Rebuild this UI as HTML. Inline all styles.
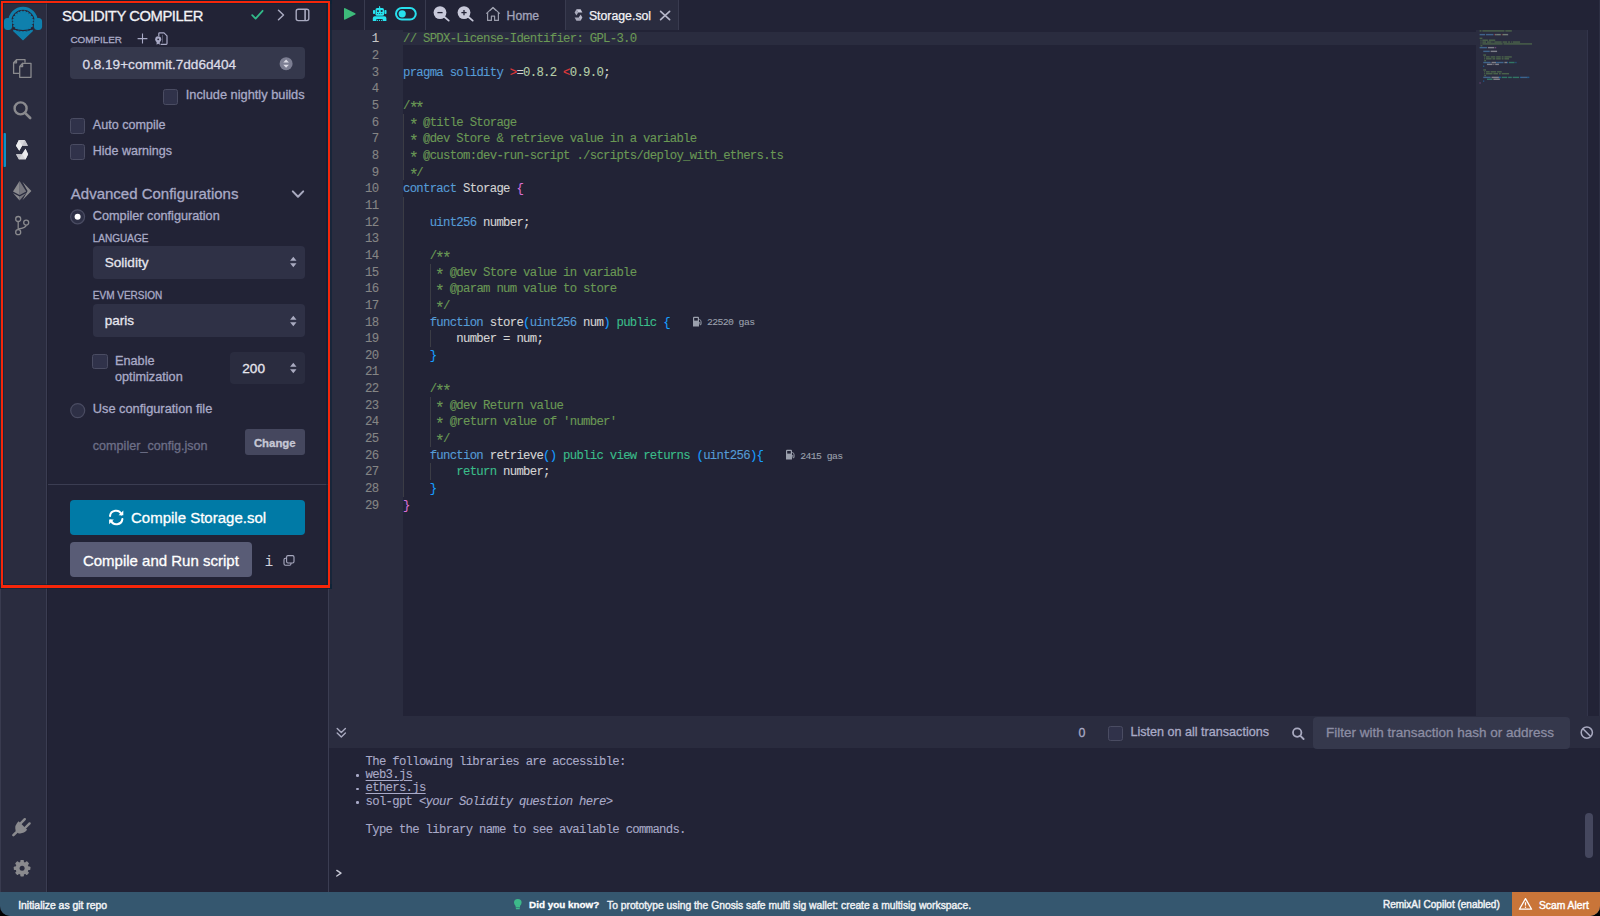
<!DOCTYPE html>
<html><head><meta charset="utf-8">
<style>
*{margin:0;padding:0;box-sizing:border-box}
html,body{width:1600px;height:916px;overflow:hidden;background:#000}
body{position:relative;font-family:"Liberation Sans",sans-serif;color:#a9aac0}
.a{position:absolute}
.t{position:absolute;white-space:nowrap;line-height:1;-webkit-text-stroke:0.3px currentColor}
.mono{-webkit-text-stroke:0.1px currentColor}
.mono{font-family:"Liberation Mono",monospace}
svg{position:absolute;overflow:visible}
.cb{position:absolute;width:15.2px;height:15.5px;background:#30324a;border:1px solid #4a4c62;border-radius:2.5px}
</style></head><body>
<div class="a" style="left:0px;top:0px;width:1600px;height:916px;background:#222336;border-radius:0 0 10px 10px"></div>
<div class="a" style="left:0px;top:0px;width:46px;height:892px;background:#2a2c3f"></div>
<div class="a" style="left:46px;top:0px;width:1px;height:892px;background:#3b3d52"></div>
<div class="a" style="left:328px;top:0px;width:1px;height:892px;background:#3b3d52"></div>
<svg style="left:0;top:0" width="46" height="46" viewBox="0 0 46 46">
<g fill="#0f80ad">
<path d="M8.25 21.45 A14.75 14.75 0 0 1 37.75 21.45 L34.75 21.45 A11.75 11.75 0 0 0 11.25 21.45 Z"/>
<rect x="8.25" y="21" width="3" height="4"/>
<rect x="34.75" y="21" width="3" height="4"/>
<rect x="3.9" y="18.1" width="8.2" height="11.8" rx="3.6"/>
<rect x="33.9" y="18.1" width="8.2" height="11.8" rx="3.6"/>
<path d="M13.4 29.6 Q23 33.6 32.6 29.6 L23 39.4 Z"/>
</g>
<circle cx="23" cy="21.4" r="11.1" fill="#2a1f30"/>
<g fill="#0f80ad">
<circle cx="23" cy="21.4" r="9.3"/>
<circle cx="13.72" cy="19.93" r="1.5"/><circle cx="14.62" cy="17.13" r="1.5"/><circle cx="16.35" cy="14.75" r="1.5"/><circle cx="18.73" cy="13.02" r="1.5"/><circle cx="21.53" cy="12.12" r="1.5"/><circle cx="24.47" cy="12.12" r="1.5"/><circle cx="27.27" cy="13.02" r="1.5"/><circle cx="29.65" cy="14.75" r="1.5"/><circle cx="31.38" cy="17.13" r="1.5"/><circle cx="32.28" cy="19.93" r="1.5"/><circle cx="32.28" cy="22.87" r="1.5"/><circle cx="31.38" cy="25.67" r="1.5"/><circle cx="29.65" cy="28.05" r="1.5"/><circle cx="27.27" cy="29.78" r="1.5"/><circle cx="24.47" cy="30.68" r="1.5"/><circle cx="21.53" cy="30.68" r="1.5"/><circle cx="18.73" cy="29.78" r="1.5"/><circle cx="16.35" cy="28.05" r="1.5"/><circle cx="14.62" cy="25.67" r="1.5"/><circle cx="13.72" cy="22.87" r="1.5"/>
</g>
<path d="M11.6 28.4 Q23 33.4 34.4 28.4 L34.4 36 L11.6 36 Z" fill="#0f80ad" opacity="0"/>
<path d="M12.8 28.6 Q23 32.6 33.2 28.6" fill="none" stroke="#2a1f30" stroke-width="1.1"/>
<path d="M13.4 29.2 Q23 33.2 32.6 29.2 L33 30.4 L23 40 L13 30.4 Z" fill="#0f80ad" transform="translate(0,0.6)"/>
</svg>
<div class="a" style="left:3px;top:133px;width:2.5px;height:33.5px;background:#0f8fc4;border-radius:1px"></div>
<svg style="left:0;top:50" width="46" height="34" viewBox="0 50 46 34">
<g fill="none" stroke="#8a8a8e" stroke-width="1.3" stroke-linejoin="round">
<path d="M16.5 59.6 L25 59.6 L25 62.7 M19.1 73.4 L13.6 73.4 L13.6 62.8 L16.5 59.6 L16.5 62.8 L13.6 62.8"/>
<path d="M22.6 63.3 L31 63.3 L31 77.3 L19.7 77.3 L19.7 66.5 L22.6 63.3 L22.6 66.5 L19.7 66.5"/>
</g></svg>
<svg style="left:0;top:95" width="46" height="30" viewBox="0 95 46 30">
<circle cx="20.6" cy="108.4" r="6" fill="none" stroke="#8a8a8e" stroke-width="2.4"/>
<path d="M25 112.8 L30.2 118" stroke="#8a8a8e" stroke-width="2.6" stroke-linecap="round"/>
</svg>
<svg style="left:0;top:136" width="46" height="28" viewBox="0 136 46 28">
<path d="M18.9 140 L24.8 140 L27.9 145.8 L22.1 145.8 L19.3 150.7 L16 145.8 Z" fill="#d8d8dc"/>
<path d="M18.9 140 L22.1 145.8 L19.3 150.7 L16 145.8 Z" fill="#ececee"/>
<path d="M24.8 140 L27.9 145.8 L22.1 145.8 Z" fill="#c4c4ca"/>
<path d="M25.5 148.8 L28.1 154.2 L25.5 159.4 L19 159.4 L16 154.2 L21.8 154.2 Z" fill="#d8d8dc"/>
<path d="M25.5 148.8 L28.1 154.2 L25.5 159.4 L22.4 154.2 Z" fill="#ececee"/>
<path d="M16 154.2 L21.8 154.2 L19 159.4 Z" fill="#c4c4ca"/>
</svg>
<svg style="left:0;top:178" width="46" height="26" viewBox="0 178 46 26">
<g fill="#8a8a8e">
<path d="M19.6 181 L13 191.4 L19.6 195 Z"/>
<path d="M19.6 181 L26.2 191.4 L19.6 195 Z" opacity="0.8"/>
<path d="M13 192.9 L19.6 200.4 L19.6 196.6 Z"/>
<path d="M26.2 192.9 L19.6 200.4 L19.6 196.6 Z" opacity="0.8"/>
<path d="M22.4 181.8 L31.4 191 L22.4 200.2 L27.6 191 Z"/>
</g></svg>
<svg style="left:0;top:212" width="46" height="28" viewBox="0 212 46 28">
<g fill="none" stroke="#8a8a8e" stroke-width="1.3">
<circle cx="18.2" cy="219" r="2.5"/>
<circle cx="18.2" cy="232.2" r="2.5"/>
<circle cx="26.2" cy="222.6" r="2.5"/>
<path d="M18.2 221.5 L18.2 229.7"/>
<path d="M26.2 225.1 Q26 228 18.2 229"/>
</g></svg>
<svg style="left:0;top:814" width="46" height="26" viewBox="0 814 46 26">
<g fill="#8a8a8e">
<path d="M13.4 835.2 L17.8 830.8" stroke="#8a8a8e" stroke-width="2.6" stroke-linecap="round"/>
<path d="M15.6 830.4 Q14.2 825.2 18.6 821.2 L27.2 829.8 Q23.6 834.2 18.2 833.2 Z"/>
<path d="M20.4 823.6 L24.8 819.2" stroke="#8a8a8e" stroke-width="2.4" stroke-linecap="round"/>
<path d="M25 828 L29.6 823.4" stroke="#8a8a8e" stroke-width="2.4" stroke-linecap="round"/>
</g></svg>
<svg style="left:0;top:856" width="46" height="24" viewBox="0 856 46 24">
<g transform="translate(22.1,868.2)">
<circle r="6.5" fill="#8a8a8e"/>
<g fill="#8a8a8e">
<rect x="-1.8" y="-8.3" width="3.6" height="16.6" rx="0.8"/>
<rect x="-1.8" y="-8.3" width="3.6" height="16.6" rx="0.8" transform="rotate(45)"/>
<rect x="-1.8" y="-8.3" width="3.6" height="16.6" rx="0.8" transform="rotate(90)"/>
<rect x="-1.8" y="-8.3" width="3.6" height="16.6" rx="0.8" transform="rotate(135)"/>
</g>
<circle r="2.5" fill="#2a2c3f"/>
</g></svg>
<div class="t" style="left:62.00px;top:8.67px;font-size:14.8px;color:#f2f2f6;letter-spacing:-0.45px">SOLIDITY COMPILER</div>
<svg style="left:250;top:6" width="20" height="18" viewBox="250 6 20 18">
<path d="M252.2 15.2 L255.6 18.6 L262.6 10.8" fill="none" stroke="#32ba89" stroke-width="1.8" stroke-linecap="round" stroke-linejoin="round"/>
</svg>
<svg style="left:275;top:6" width="12" height="18" viewBox="275 6 12 18">
<path d="M278.5 10.2 L283.5 15 L278.5 19.8" fill="none" stroke="#a9aac0" stroke-width="1.5" stroke-linecap="round" stroke-linejoin="round"/>
</svg>
<svg style="left:292;top:6" width="20" height="18" viewBox="292 6 20 18">
<rect x="296.2" y="9.2" width="12.6" height="11.4" rx="2" fill="none" stroke="#a9aac0" stroke-width="1.4"/>
<rect x="304.3" y="9.2" width="1.6" height="11.4" fill="#a9aac0"/>
</svg>
<div class="t" style="left:70.40px;top:34.52px;font-size:9.9px;color:#a9aac6;">COMPILER</div>
<svg style="left:134;top:30" width="40" height="18" viewBox="134 30 40 18">
<path d="M142.5 33.6 L142.5 43.4 M137.6 38.6 L147.4 38.6" stroke="#a9aac6" stroke-width="1.1"/>
<path d="M158.8 36 L158.8 33.6 Q158.8 32.8 159.6 32.8 L164 32.8 L167 35.8 L167 43.6 Q167 44.4 166.2 44.4 L160.6 44.4" fill="none" stroke="#a9aac6" stroke-width="1.2" stroke-linejoin="round"/>
<path d="M162.6 34.8 L162.6 42.6" stroke="#a9aac6" stroke-width="0.7" opacity="0.6"/>
<path d="M156.6 41 L156.6 44.8 L158.2 43.8 L159.8 44.8 L159.8 41 Z" fill="#a9aac6"/>
<circle cx="158.2" cy="39.3" r="3" fill="#a9aac6"/>
<circle cx="158.2" cy="39.3" r="0.9" fill="#222336"/>
</svg>
<div class="a" style="left:70px;top:47.3px;width:234.6px;height:32px;background:#35384c;border-radius:4px"></div>
<div class="t" style="left:82.40px;top:57.78px;font-size:13.6px;color:#dcdce6;">0.8.19+commit.7dd6d404</div>
<svg style="left:278;top:56" width="16" height="16" viewBox="278 56 16 16">
<circle cx="286.1" cy="63.7" r="6.5" fill="#7c7e92"/>
<path d="M283.3 62.6 L286.1 59.6 L288.9 62.6 Z M283.3 64.8 L286.1 67.8 L288.9 64.8 Z" fill="#dcdce6"/>
</svg>
<div class="cb" style="left:163px;top:89px"></div>
<div class="t" style="left:185.80px;top:88.76px;font-size:12.8px;color:#a9aac6;">Include nightly builds</div>
<div class="cb" style="left:70px;top:118.4px"></div>
<div class="t" style="left:92.80px;top:118.63px;font-size:12.6px;color:#a9aac6;">Auto compile</div>
<div class="cb" style="left:70px;top:144.3px"></div>
<div class="t" style="left:92.80px;top:144.52px;font-size:12.5px;color:#a9aac6;">Hide warnings</div>
<div class="t" style="left:70.80px;top:186.10px;font-size:15px;color:#a9aac6;">Advanced Configurations</div>
<svg style="left:288;top:186" width="20" height="16" viewBox="288 186 20 16">
<path d="M292.8 191.4 L298 196.8 L303.2 191.4" fill="none" stroke="#a9aac0" stroke-width="2" stroke-linecap="round" stroke-linejoin="round"/>
</svg>
<svg style="left:68;top:207" width="20" height="20" viewBox="68 207 20 20">
<circle cx="77.6" cy="216.8" r="7" fill="#2e3046" stroke="#4a4c62" stroke-width="1.2"/>
<circle cx="77.6" cy="216.8" r="3" fill="#ffffff"/>
</svg>
<div class="t" style="left:92.80px;top:209.85px;font-size:12.7px;color:#a9aac6;">Compiler configuration</div>
<div class="t" style="left:92.80px;top:233.63px;font-size:10px;color:#a9aac6;">LANGUAGE</div>
<div class="a" style="left:92.6px;top:246.1px;width:212px;height:32.6px;background:#2f3146;border-radius:4px"></div>
<div class="t" style="left:104.70px;top:256.18px;font-size:13.6px;color:#e6e6ee;">Solidity</div>
<div class="t" style="left:92.80px;top:290.93px;font-size:10px;color:#a9aac6;">EVM VERSION</div>
<div class="a" style="left:92.6px;top:304.3px;width:212px;height:32.4px;background:#2f3146;border-radius:4px"></div>
<div class="t" style="left:104.70px;top:314.07px;font-size:13.5px;color:#e6e6ee;">paris</div>
<svg style="left:286;top:254.39999999999998" width="14" height="16" viewBox="286 254.39999999999998 14 16">
<path d="M290.1 261.2 L293.3 257.2 L296.5 261.2 Z M290.1 263.59999999999997 L293.3 267.59999999999997 L296.5 263.59999999999997 Z" fill="#a9aac0"/>
</svg>
<svg style="left:286;top:312.6" width="14" height="16" viewBox="286 312.6 14 16">
<path d="M290.1 319.40000000000003 L293.3 315.40000000000003 L296.5 319.40000000000003 Z M290.1 321.8 L293.3 325.8 L296.5 321.8 Z" fill="#a9aac0"/>
</svg>
<div class="cb" style="left:92.4px;top:353.8px"></div>
<div class="t" style="left:115.00px;top:355.25px;font-size:12.7px;color:#a9aac6;">Enable</div>
<div class="t" style="left:115.00px;top:370.85px;font-size:12.7px;color:#a9aac6;">optimization</div>
<div class="a" style="left:229.7px;top:351.7px;width:75px;height:32.8px;background:#2a2c3f;border-radius:4px"></div>
<div class="t" style="left:242.30px;top:361.78px;font-size:13.6px;color:#e6e6ee;">200</div>
<svg style="left:286;top:360.2" width="14" height="16" viewBox="286 360.2 14 16">
<path d="M290.1 367.0 L293.3 363.0 L296.5 367.0 Z M290.1 369.4 L293.3 373.4 L296.5 369.4 Z" fill="#a9aac0"/>
</svg>
<svg style="left:68;top:401" width="20" height="20" viewBox="68 401 20 20">
<circle cx="77.7" cy="410.6" r="7" fill="#2e3046" stroke="#4a4c62" stroke-width="1.2"/>
</svg>
<div class="t" style="left:92.80px;top:403.16px;font-size:12.8px;color:#a9aac6;">Use configuration file</div>
<div class="t" style="left:92.80px;top:439.83px;font-size:12.6px;color:#6d6f87;">compiler_config.json</div>
<div class="a" style="left:245.2px;top:429.3px;width:59.8px;height:25.7px;background:#45475e;border-radius:3px"></div>
<div class="t" style="left:253.90px;top:437.55px;font-size:11.4px;color:#c5c6d4;font-weight:700;">Change</div>
<div class="a" style="left:47px;top:484px;width:281px;height:1px;background:#3b3d52"></div>
<div class="a" style="left:69.8px;top:499.8px;width:235.2px;height:35px;background:#007aa6;border-radius:4px"></div>
<svg style="left:106;top:508" width="20" height="20" viewBox="106 508 20 20">
<g fill="none" stroke="#ffffff" stroke-width="2" stroke-linecap="round">
<path d="M110 516 A6 6 0 0 1 121.5 514.5"/>
<path d="M122.4 519 A6 6 0 0 1 110.9 520.5"/>
</g>
<path d="M118.6 515.2 L123.3 515.2 L123.3 510.5 Z" fill="#ffffff"/>
<path d="M109.1 519.6 L113.8 519.6 L109.1 524.3 Z" fill="#ffffff"/>
</svg>
<div class="t" style="left:131.00px;top:509.70px;font-size:15px;color:#ffffff;">Compile Storage.sol</div>
<div class="a" style="left:69.8px;top:542.4px;width:181.9px;height:35px;background:#595c76;border-radius:4px"></div>
<div class="t" style="left:82.90px;top:553.10px;font-size:15px;color:#ffffff;">Compile and Run script</div>
<div class="t mono" style="left:264.80px;top:555.07px;font-size:14px;color:#d0d1dc;">i</div>
<svg style="left:280;top:552" width="18" height="18" viewBox="280 552 18 18">
<g fill="none" stroke="#a9aac0" stroke-width="1.1">
<rect x="286.6" y="555.6" width="7.4" height="7.4" rx="1.4"/>
<path d="M286.6 558.3 L285.4 558.3 Q284 558.3 284 559.7 L284 563.8 Q284 565.2 285.4 565.2 L289.6 565.2 Q291 565.2 291 563.8 L291 563"/>
</g></svg>
<div class="a" style="left:329px;top:0px;width:1271px;height:30px;background:#222336"></div>
<div class="a" style="left:364px;top:0px;width:1px;height:30px;background:#393b4f"></div>
<div class="a" style="left:424.5px;top:0px;width:1px;height:30px;background:#393b4f"></div>
<div class="a" style="left:565px;top:0px;width:114px;height:30px;background:#2a2c3f;border-left:1px solid #393b4f;border-right:1px solid #393b4f"></div>
<svg style="left:340;top:4" width="20" height="22" viewBox="340 4 20 22">
<path d="M345.2 8.2 Q344 7.5 344 9 L344 18.8 Q344 20.3 345.2 19.6 L355.2 14.6 Q356.3 13.9 355.2 13.3 Z" fill="#3dba7a"/>
</svg>
<svg style="left:370;top:4" width="20" height="20" viewBox="370 4 20 20">
<g fill="#27e4f0">
<path d="M378.9 8.6 L379.3 6 L380 6 L380.4 8.6 Z"/>
<rect x="375.5" y="8.1" width="8.5" height="7.7" rx="1.6"/>
<rect x="373" y="9.9" width="2.1" height="4.1" rx="0.8"/>
<rect x="384.4" y="9.9" width="2.1" height="4.1" rx="0.8"/>
<path d="M372.8 21 L372.8 18.2 Q372.8 16.2 374.8 16.2 L384.4 16.2 Q386.4 16.2 386.4 18.2 L386.4 21 L382.6 21 L382.6 19 L376.4 19 L376.4 21 Z"/>
<circle cx="377.6" cy="20.4" r="0.55"/><circle cx="379.5" cy="20.4" r="0.55"/><circle cx="381.4" cy="20.4" r="0.55"/>
</g>
<g fill="#1f3a4a">
<rect x="377" y="10.1" width="1.9" height="1.8" rx="0.4"/>
<rect x="380.7" y="10.1" width="1.9" height="1.8" rx="0.4"/>
<circle cx="377.6" cy="13.6" r="0.5"/><circle cx="379.7" cy="13.6" r="0.5"/><circle cx="381.8" cy="13.6" r="0.5"/>
</g>
</svg>
<svg style="left:392;top:4" width="28" height="22" viewBox="392 4 28 22">
<rect x="396" y="8" width="19.8" height="11.6" rx="5.8" fill="none" stroke="#27e0ee" stroke-width="2"/>
<circle cx="402.2" cy="13.8" r="3.6" fill="#27e0ee"/>
</svg>
<svg style="left:429.7;top:2" width="22" height="24" viewBox="429.7 2 22 24">
<circle cx="439.7" cy="12.6" r="6.4" fill="#c8c9da"/>
<path d="M443.9 16.8 L448.4 20.6" stroke="#c8c9da" stroke-width="1.8" stroke-linecap="round"/>
<path d="M437.09999999999997 12.6 L442.3 12.6" stroke="#222336" stroke-width="1.3"/></svg>
<svg style="left:453.8;top:2" width="22" height="24" viewBox="453.8 2 22 24">
<circle cx="463.8" cy="12.6" r="6.4" fill="#c8c9da"/>
<path d="M468.0 16.8 L472.5 20.6" stroke="#c8c9da" stroke-width="1.8" stroke-linecap="round"/>
<path d="M461.2 12.6 L466.40000000000003 12.6" stroke="#222336" stroke-width="1.3"/><path d="M463.8 10 L463.8 15.2" stroke="#222336" stroke-width="1.3"/></svg>
<svg style="left:482;top:4" width="22" height="20" viewBox="482 4 22 20">
<g fill="none" stroke="#9a9cab" stroke-width="1.2" stroke-linejoin="round">
<path d="M486.3 13.6 L493 7.4 L499.8 13.6"/>
<path d="M487.6 12.6 L487.6 20.4 L491.4 20.4 L491.4 16.2 L494.6 16.2 L494.6 20.4 L498.4 20.4 L498.4 12.6"/>
<path d="M489.8 10.6 L493 7.8 L496.2 10.6"/>
</g></svg>
<div class="t" style="left:506.60px;top:9.67px;font-size:12.2px;color:#a3a4bb;">Home</div>
<svg style="left:572;top:7" width="12" height="16" viewBox="572 7 12 16">
<g fill="#c8c9da">
<path d="M576.4 9.3 L580.6 9.3 L582.4 12.4 L578.2 12.4 Z"/>
<path d="M576.4 9.3 L578.2 12.4 L576.4 15.5 L574.6 12.4 Z" opacity="0.8"/>
<path d="M580.6 14.6 L582.4 17.6 L580.6 20.7 L578.8 17.6 Z" opacity="0.9"/>
<path d="M574.6 17.6 L578.8 17.6 L580.6 20.7 L576.4 20.7 Z" opacity="0.8"/>
</g></svg>
<div class="t" style="left:588.90px;top:10.19px;font-size:12.3px;color:#f2f2f6;-webkit-text-stroke:0.25px #f2f2f6">Storage.sol</div>
<svg style="left:656;top:7" width="18" height="16" viewBox="656 7 18 16">
<path d="M660.6 11.4 L669.6 19.6 M669.6 11.4 L660.6 19.6" stroke="#b5b6c8" stroke-width="1.7" stroke-linecap="round"/>
</svg>
<div class="a" style="left:329px;top:30px;width:74px;height:686px;background:#2a2c3f"></div>
<div class="a" style="left:403px;top:30px;width:1073px;height:686px;background:#222336"></div>
<div class="a" style="left:403px;top:31.8px;width:1073px;height:12.8px;background:#2a2c3f"></div>
<div class="a" style="left:1476px;top:30px;width:112px;height:686px;background:#2a2c3f"></div>
<div class="a" style="left:1587px;top:30px;width:1px;height:686px;background:#32344a"></div>
<div class="a" style="left:1588px;top:30px;width:12px;height:686px;background:#222336"></div>
<div class="a" style="left:1598.5px;top:0px;width:1.5px;height:716px;background:#2c2e42"></div>
<div class="a" style="left:403.4px;top:113.75px;width:1px;height:66.6px;background:#3b3c45"></div>
<div class="a" style="left:403.4px;top:197.0px;width:1px;height:299.7px;background:#3b3c45"></div>
<div class="a" style="left:430.1px;top:263.6px;width:1px;height:49.95px;background:#3b3c45"></div>
<div class="a" style="left:430.1px;top:330.2px;width:1px;height:16.65px;background:#3b3c45"></div>
<div class="a" style="left:430.1px;top:396.8px;width:1px;height:49.95px;background:#3b3c45"></div>
<div class="a" style="left:430.1px;top:463.4px;width:1px;height:16.65px;background:#3b3c45"></div>
<div class="t mono" style="left:371.73px;top:33.48px;font-size:12.3px;color:#c6c6c6;letter-spacing:-0.710px">1</div>
<div class="t mono" style="left:403.00px;top:33.48px;font-size:12.3px;color:#d4d4d4;letter-spacing:-0.710px"><span style="color:#6a9955">//&nbsp;SPDX-License-Identifier:&nbsp;GPL-3.0</span></div>
<div class="t mono" style="left:371.73px;top:50.13px;font-size:12.3px;color:#858585;letter-spacing:-0.710px">2</div>
<div class="t mono" style="left:371.73px;top:66.78px;font-size:12.3px;color:#858585;letter-spacing:-0.710px">3</div>
<div class="t mono" style="left:403.00px;top:66.78px;font-size:12.3px;color:#d4d4d4;letter-spacing:-0.710px"><span style="color:#569cd6">pragma</span><span style="color:#d4d4d4">&nbsp;</span><span style="color:#569cd6">solidity</span><span style="color:#d4d4d4">&nbsp;</span><span style="color:#e23a3a">></span><span style="color:#d4d4d4">=</span><span style="color:#b5cea8">0.8.2</span><span style="color:#d4d4d4">&nbsp;</span><span style="color:#e23a3a"><</span><span style="color:#b5cea8">0.9.0</span><span style="color:#d4d4d4">;</span></div>
<div class="t mono" style="left:371.73px;top:83.43px;font-size:12.3px;color:#858585;letter-spacing:-0.710px">4</div>
<div class="t mono" style="left:371.73px;top:100.08px;font-size:12.3px;color:#858585;letter-spacing:-0.710px">5</div>
<div class="t mono" style="left:403.00px;top:100.08px;font-size:12.3px;color:#d4d4d4;letter-spacing:-0.710px"><span style="color:#6a9955">/<span style="display:inline-block;transform:translateY(3.6px) scale(1.3)">*</span><span style="display:inline-block;transform:translateY(3.6px) scale(1.3)">*</span></span></div>
<div class="t mono" style="left:371.73px;top:116.73px;font-size:12.3px;color:#858585;letter-spacing:-0.710px">6</div>
<div class="t mono" style="left:403.00px;top:116.73px;font-size:12.3px;color:#d4d4d4;letter-spacing:-0.710px"><span style="color:#6a9955">&nbsp;<span style="display:inline-block;transform:translateY(3.6px) scale(1.3)">*</span>&nbsp;@title&nbsp;Storage</span></div>
<div class="t mono" style="left:371.73px;top:133.38px;font-size:12.3px;color:#858585;letter-spacing:-0.710px">7</div>
<div class="t mono" style="left:403.00px;top:133.38px;font-size:12.3px;color:#d4d4d4;letter-spacing:-0.710px"><span style="color:#6a9955">&nbsp;<span style="display:inline-block;transform:translateY(3.6px) scale(1.3)">*</span>&nbsp;@dev&nbsp;Store&nbsp;&amp;&nbsp;retrieve&nbsp;value&nbsp;in&nbsp;a&nbsp;variable</span></div>
<div class="t mono" style="left:371.73px;top:150.03px;font-size:12.3px;color:#858585;letter-spacing:-0.710px">8</div>
<div class="t mono" style="left:403.00px;top:150.03px;font-size:12.3px;color:#d4d4d4;letter-spacing:-0.710px"><span style="color:#6a9955">&nbsp;<span style="display:inline-block;transform:translateY(3.6px) scale(1.3)">*</span>&nbsp;@custom:dev-run-script&nbsp;./scripts/deploy_with_ethers.ts</span></div>
<div class="t mono" style="left:371.73px;top:166.68px;font-size:12.3px;color:#858585;letter-spacing:-0.710px">9</div>
<div class="t mono" style="left:403.00px;top:166.68px;font-size:12.3px;color:#d4d4d4;letter-spacing:-0.710px"><span style="color:#6a9955">&nbsp;<span style="display:inline-block;transform:translateY(3.6px) scale(1.3)">*</span>/</span></div>
<div class="t mono" style="left:365.06px;top:183.33px;font-size:12.3px;color:#858585;letter-spacing:-0.710px">10</div>
<div class="t mono" style="left:403.00px;top:183.33px;font-size:12.3px;color:#d4d4d4;letter-spacing:-0.710px"><span style="color:#569cd6">contract</span><span style="color:#d4d4d4">&nbsp;Storage&nbsp;</span><span style="color:#da70d6">{</span></div>
<div class="t mono" style="left:365.06px;top:199.98px;font-size:12.3px;color:#858585;letter-spacing:-0.710px">11</div>
<div class="t mono" style="left:365.06px;top:216.63px;font-size:12.3px;color:#858585;letter-spacing:-0.710px">12</div>
<div class="t mono" style="left:403.00px;top:216.63px;font-size:12.3px;color:#d4d4d4;letter-spacing:-0.710px"><span style="color:#d4d4d4">&nbsp;&nbsp;&nbsp;&nbsp;</span><span style="color:#569cd6">uint256</span><span style="color:#d4d4d4">&nbsp;number;</span></div>
<div class="t mono" style="left:365.06px;top:233.28px;font-size:12.3px;color:#858585;letter-spacing:-0.710px">13</div>
<div class="t mono" style="left:365.06px;top:249.93px;font-size:12.3px;color:#858585;letter-spacing:-0.710px">14</div>
<div class="t mono" style="left:403.00px;top:249.93px;font-size:12.3px;color:#d4d4d4;letter-spacing:-0.710px"><span style="color:#6a9955">&nbsp;&nbsp;&nbsp;&nbsp;/<span style="display:inline-block;transform:translateY(3.6px) scale(1.3)">*</span><span style="display:inline-block;transform:translateY(3.6px) scale(1.3)">*</span></span></div>
<div class="t mono" style="left:365.06px;top:266.58px;font-size:12.3px;color:#858585;letter-spacing:-0.710px">15</div>
<div class="t mono" style="left:403.00px;top:266.58px;font-size:12.3px;color:#d4d4d4;letter-spacing:-0.710px"><span style="color:#6a9955">&nbsp;&nbsp;&nbsp;&nbsp;&nbsp;<span style="display:inline-block;transform:translateY(3.6px) scale(1.3)">*</span>&nbsp;@dev&nbsp;Store&nbsp;value&nbsp;in&nbsp;variable</span></div>
<div class="t mono" style="left:365.06px;top:283.23px;font-size:12.3px;color:#858585;letter-spacing:-0.710px">16</div>
<div class="t mono" style="left:403.00px;top:283.23px;font-size:12.3px;color:#d4d4d4;letter-spacing:-0.710px"><span style="color:#6a9955">&nbsp;&nbsp;&nbsp;&nbsp;&nbsp;<span style="display:inline-block;transform:translateY(3.6px) scale(1.3)">*</span>&nbsp;@param&nbsp;num&nbsp;value&nbsp;to&nbsp;store</span></div>
<div class="t mono" style="left:365.06px;top:299.88px;font-size:12.3px;color:#858585;letter-spacing:-0.710px">17</div>
<div class="t mono" style="left:403.00px;top:299.88px;font-size:12.3px;color:#d4d4d4;letter-spacing:-0.710px"><span style="color:#6a9955">&nbsp;&nbsp;&nbsp;&nbsp;&nbsp;<span style="display:inline-block;transform:translateY(3.6px) scale(1.3)">*</span>/</span></div>
<div class="t mono" style="left:365.06px;top:316.53px;font-size:12.3px;color:#858585;letter-spacing:-0.710px">18</div>
<div class="t mono" style="left:403.00px;top:316.53px;font-size:12.3px;color:#d4d4d4;letter-spacing:-0.710px"><span style="color:#d4d4d4">&nbsp;&nbsp;&nbsp;&nbsp;</span><span style="color:#569cd6">function</span><span style="color:#d4d4d4">&nbsp;store</span><span style="color:#179fff">(</span><span style="color:#569cd6">uint256</span><span style="color:#d4d4d4">&nbsp;num</span><span style="color:#179fff">)</span><span style="color:#d4d4d4">&nbsp;</span><span style="color:#3bbd8a">public</span><span style="color:#d4d4d4">&nbsp;</span><span style="color:#179fff">{</span></div>
<div class="t mono" style="left:365.06px;top:333.18px;font-size:12.3px;color:#858585;letter-spacing:-0.710px">19</div>
<div class="t mono" style="left:403.00px;top:333.18px;font-size:12.3px;color:#d4d4d4;letter-spacing:-0.710px"><span style="color:#d4d4d4">&nbsp;&nbsp;&nbsp;&nbsp;&nbsp;&nbsp;&nbsp;&nbsp;number&nbsp;=&nbsp;num;</span></div>
<div class="t mono" style="left:365.06px;top:349.83px;font-size:12.3px;color:#858585;letter-spacing:-0.710px">20</div>
<div class="t mono" style="left:403.00px;top:349.83px;font-size:12.3px;color:#d4d4d4;letter-spacing:-0.710px"><span style="color:#d4d4d4">&nbsp;&nbsp;&nbsp;&nbsp;</span><span style="color:#179fff">}</span></div>
<div class="t mono" style="left:365.06px;top:366.48px;font-size:12.3px;color:#858585;letter-spacing:-0.710px">21</div>
<div class="t mono" style="left:365.06px;top:383.13px;font-size:12.3px;color:#858585;letter-spacing:-0.710px">22</div>
<div class="t mono" style="left:403.00px;top:383.13px;font-size:12.3px;color:#d4d4d4;letter-spacing:-0.710px"><span style="color:#6a9955">&nbsp;&nbsp;&nbsp;&nbsp;/<span style="display:inline-block;transform:translateY(3.6px) scale(1.3)">*</span><span style="display:inline-block;transform:translateY(3.6px) scale(1.3)">*</span></span></div>
<div class="t mono" style="left:365.06px;top:399.78px;font-size:12.3px;color:#858585;letter-spacing:-0.710px">23</div>
<div class="t mono" style="left:403.00px;top:399.78px;font-size:12.3px;color:#d4d4d4;letter-spacing:-0.710px"><span style="color:#6a9955">&nbsp;&nbsp;&nbsp;&nbsp;&nbsp;<span style="display:inline-block;transform:translateY(3.6px) scale(1.3)">*</span>&nbsp;@dev&nbsp;Return&nbsp;value</span></div>
<div class="t mono" style="left:365.06px;top:416.43px;font-size:12.3px;color:#858585;letter-spacing:-0.710px">24</div>
<div class="t mono" style="left:403.00px;top:416.43px;font-size:12.3px;color:#d4d4d4;letter-spacing:-0.710px"><span style="color:#6a9955">&nbsp;&nbsp;&nbsp;&nbsp;&nbsp;<span style="display:inline-block;transform:translateY(3.6px) scale(1.3)">*</span>&nbsp;@return&nbsp;value&nbsp;of&nbsp;'number'</span></div>
<div class="t mono" style="left:365.06px;top:433.08px;font-size:12.3px;color:#858585;letter-spacing:-0.710px">25</div>
<div class="t mono" style="left:403.00px;top:433.08px;font-size:12.3px;color:#d4d4d4;letter-spacing:-0.710px"><span style="color:#6a9955">&nbsp;&nbsp;&nbsp;&nbsp;&nbsp;<span style="display:inline-block;transform:translateY(3.6px) scale(1.3)">*</span>/</span></div>
<div class="t mono" style="left:365.06px;top:449.73px;font-size:12.3px;color:#858585;letter-spacing:-0.710px">26</div>
<div class="t mono" style="left:403.00px;top:449.73px;font-size:12.3px;color:#d4d4d4;letter-spacing:-0.710px"><span style="color:#d4d4d4">&nbsp;&nbsp;&nbsp;&nbsp;</span><span style="color:#569cd6">function</span><span style="color:#d4d4d4">&nbsp;retrieve</span><span style="color:#179fff">()</span><span style="color:#d4d4d4">&nbsp;</span><span style="color:#3bbd8a">public</span><span style="color:#d4d4d4">&nbsp;</span><span style="color:#3bbd8a">view</span><span style="color:#d4d4d4">&nbsp;</span><span style="color:#3bbd8a">returns</span><span style="color:#d4d4d4">&nbsp;</span><span style="color:#179fff">(</span><span style="color:#569cd6">uint256</span><span style="color:#179fff">)</span><span style="color:#179fff">{</span></div>
<div class="t mono" style="left:365.06px;top:466.38px;font-size:12.3px;color:#858585;letter-spacing:-0.710px">27</div>
<div class="t mono" style="left:403.00px;top:466.38px;font-size:12.3px;color:#d4d4d4;letter-spacing:-0.710px"><span style="color:#d4d4d4">&nbsp;&nbsp;&nbsp;&nbsp;&nbsp;&nbsp;&nbsp;&nbsp;</span><span style="color:#3bbd8a">return</span><span style="color:#d4d4d4">&nbsp;number;</span></div>
<div class="t mono" style="left:365.06px;top:483.03px;font-size:12.3px;color:#858585;letter-spacing:-0.710px">28</div>
<div class="t mono" style="left:403.00px;top:483.03px;font-size:12.3px;color:#d4d4d4;letter-spacing:-0.710px"><span style="color:#d4d4d4">&nbsp;&nbsp;&nbsp;&nbsp;</span><span style="color:#179fff">}</span></div>
<div class="t mono" style="left:365.06px;top:499.68px;font-size:12.3px;color:#858585;letter-spacing:-0.710px">29</div>
<div class="t mono" style="left:403.00px;top:499.68px;font-size:12.3px;color:#d4d4d4;letter-spacing:-0.710px"><span style="color:#da70d6">}</span></div>
<svg style="left:690.8;top:314.94999999999993" width="14" height="14" viewBox="690.8 314.94999999999993 14 14">
<g fill="#9ba0ad">
<path d="M692.8 317.74999999999994 Q692.8 316.74999999999994 693.8 316.74999999999994 L697.8 316.74999999999994 Q698.8 316.74999999999994 698.8 317.74999999999994 L698.8 326.54999999999995 L692.8 326.54999999999995 Z"/>
</g>
<rect x="694.0" y="317.94999999999993" width="3.6" height="2.6" fill="#222336"/>
<path d="M699.1999999999999 318.94999999999993 Q701.4 320.44999999999993 701.0 323.44999999999993 Q700.8 325.3499999999999 700.0 324.74999999999994 L699.4 321.94999999999993" fill="none" stroke="#9ba0ad" stroke-width="0.9"/>
</svg>
<div class="t mono" style="left:707.00px;top:318.34px;font-size:9.8px;color:#9ba0ad;letter-spacing:-0.61px">22520&nbsp;gas</div>
<svg style="left:784.1;top:448.1499999999999" width="14" height="14" viewBox="784.1 448.1499999999999 14 14">
<g fill="#9ba0ad">
<path d="M786.1 450.94999999999993 Q786.1 449.94999999999993 787.1 449.94999999999993 L791.1 449.94999999999993 Q792.1 449.94999999999993 792.1 450.94999999999993 L792.1 459.74999999999994 L786.1 459.74999999999994 Z"/>
</g>
<rect x="787.3000000000001" y="451.1499999999999" width="3.6" height="2.6" fill="#222336"/>
<path d="M792.5 452.1499999999999 Q794.7 453.6499999999999 794.3000000000001 456.6499999999999 Q794.1 458.5499999999999 793.3000000000001 457.94999999999993 L792.7 455.1499999999999" fill="none" stroke="#9ba0ad" stroke-width="0.9"/>
</svg>
<div class="t mono" style="left:800.30px;top:451.54px;font-size:9.8px;color:#9ba0ad;letter-spacing:-0.61px">2415&nbsp;gas</div>
<svg style="left:1476;top:28" width="112" height="60" viewBox="1476 28 112 60"><g opacity="0.5"><rect x="1479.60" y="30.20" width="1.84" height="1.4" fill="#6a9955"/><rect x="1482.36" y="30.20" width="22.08" height="1.4" fill="#6a9955"/><rect x="1505.36" y="30.20" width="6.44" height="1.4" fill="#6a9955"/><rect x="1479.60" y="33.92" width="5.52" height="1.4" fill="#569cd6"/><rect x="1486.04" y="33.92" width="7.36" height="1.4" fill="#569cd6"/><rect x="1494.32" y="33.92" width="0.92" height="1.4" fill="#e23a3a"/><rect x="1495.24" y="33.92" width="0.92" height="1.4" fill="#d4d4d4"/><rect x="1496.16" y="33.92" width="4.60" height="1.4" fill="#b5cea8"/><rect x="1501.68" y="33.92" width="0.92" height="1.4" fill="#e23a3a"/><rect x="1502.60" y="33.92" width="4.60" height="1.4" fill="#b5cea8"/><rect x="1507.20" y="33.92" width="0.92" height="1.4" fill="#d4d4d4"/><rect x="1479.60" y="37.64" width="2.76" height="1.4" fill="#6a9955"/><rect x="1480.52" y="39.50" width="0.92" height="1.4" fill="#6a9955"/><rect x="1482.36" y="39.50" width="5.52" height="1.4" fill="#6a9955"/><rect x="1488.80" y="39.50" width="6.44" height="1.4" fill="#6a9955"/><rect x="1480.52" y="41.36" width="0.92" height="1.4" fill="#6a9955"/><rect x="1482.36" y="41.36" width="3.68" height="1.4" fill="#6a9955"/><rect x="1486.96" y="41.36" width="4.60" height="1.4" fill="#6a9955"/><rect x="1492.48" y="41.36" width="0.92" height="1.4" fill="#6a9955"/><rect x="1494.32" y="41.36" width="7.36" height="1.4" fill="#6a9955"/><rect x="1502.60" y="41.36" width="4.60" height="1.4" fill="#6a9955"/><rect x="1508.12" y="41.36" width="1.84" height="1.4" fill="#6a9955"/><rect x="1510.88" y="41.36" width="0.92" height="1.4" fill="#6a9955"/><rect x="1512.72" y="41.36" width="7.36" height="1.4" fill="#6a9955"/><rect x="1480.52" y="43.22" width="0.92" height="1.4" fill="#6a9955"/><rect x="1482.36" y="43.22" width="20.24" height="1.4" fill="#6a9955"/><rect x="1503.52" y="43.22" width="28.52" height="1.4" fill="#6a9955"/><rect x="1480.52" y="45.08" width="1.84" height="1.4" fill="#6a9955"/><rect x="1479.60" y="46.94" width="7.36" height="1.4" fill="#569cd6"/><rect x="1487.88" y="46.94" width="6.44" height="1.4" fill="#d4d4d4"/><rect x="1495.24" y="46.94" width="0.92" height="1.4" fill="#da70d6"/><rect x="1483.28" y="50.66" width="6.44" height="1.4" fill="#569cd6"/><rect x="1490.64" y="50.66" width="6.44" height="1.4" fill="#d4d4d4"/><rect x="1483.28" y="54.38" width="2.76" height="1.4" fill="#6a9955"/><rect x="1484.20" y="56.24" width="0.92" height="1.4" fill="#6a9955"/><rect x="1486.04" y="56.24" width="3.68" height="1.4" fill="#6a9955"/><rect x="1490.64" y="56.24" width="4.60" height="1.4" fill="#6a9955"/><rect x="1496.16" y="56.24" width="4.60" height="1.4" fill="#6a9955"/><rect x="1501.68" y="56.24" width="1.84" height="1.4" fill="#6a9955"/><rect x="1504.44" y="56.24" width="7.36" height="1.4" fill="#6a9955"/><rect x="1484.20" y="58.10" width="0.92" height="1.4" fill="#6a9955"/><rect x="1486.04" y="58.10" width="5.52" height="1.4" fill="#6a9955"/><rect x="1492.48" y="58.10" width="2.76" height="1.4" fill="#6a9955"/><rect x="1496.16" y="58.10" width="4.60" height="1.4" fill="#6a9955"/><rect x="1501.68" y="58.10" width="1.84" height="1.4" fill="#6a9955"/><rect x="1504.44" y="58.10" width="4.60" height="1.4" fill="#6a9955"/><rect x="1484.20" y="59.96" width="1.84" height="1.4" fill="#6a9955"/><rect x="1483.28" y="61.82" width="7.36" height="1.4" fill="#569cd6"/><rect x="1491.56" y="61.82" width="4.60" height="1.4" fill="#d4d4d4"/><rect x="1496.16" y="61.82" width="0.92" height="1.4" fill="#179fff"/><rect x="1497.08" y="61.82" width="6.44" height="1.4" fill="#569cd6"/><rect x="1504.44" y="61.82" width="2.76" height="1.4" fill="#d4d4d4"/><rect x="1507.20" y="61.82" width="0.92" height="1.4" fill="#179fff"/><rect x="1509.04" y="61.82" width="5.52" height="1.4" fill="#3bbd8a"/><rect x="1515.48" y="61.82" width="0.92" height="1.4" fill="#179fff"/><rect x="1486.96" y="63.68" width="5.52" height="1.4" fill="#d4d4d4"/><rect x="1493.40" y="63.68" width="0.92" height="1.4" fill="#d4d4d4"/><rect x="1495.24" y="63.68" width="3.68" height="1.4" fill="#d4d4d4"/><rect x="1483.28" y="65.54" width="0.92" height="1.4" fill="#179fff"/><rect x="1483.28" y="69.26" width="2.76" height="1.4" fill="#6a9955"/><rect x="1484.20" y="71.12" width="0.92" height="1.4" fill="#6a9955"/><rect x="1486.04" y="71.12" width="3.68" height="1.4" fill="#6a9955"/><rect x="1490.64" y="71.12" width="5.52" height="1.4" fill="#6a9955"/><rect x="1497.08" y="71.12" width="4.60" height="1.4" fill="#6a9955"/><rect x="1484.20" y="72.98" width="0.92" height="1.4" fill="#6a9955"/><rect x="1486.04" y="72.98" width="6.44" height="1.4" fill="#6a9955"/><rect x="1493.40" y="72.98" width="4.60" height="1.4" fill="#6a9955"/><rect x="1498.92" y="72.98" width="1.84" height="1.4" fill="#6a9955"/><rect x="1501.68" y="72.98" width="7.36" height="1.4" fill="#6a9955"/><rect x="1484.20" y="74.84" width="1.84" height="1.4" fill="#6a9955"/><rect x="1483.28" y="76.70" width="7.36" height="1.4" fill="#569cd6"/><rect x="1491.56" y="76.70" width="7.36" height="1.4" fill="#d4d4d4"/><rect x="1498.92" y="76.70" width="1.84" height="1.4" fill="#179fff"/><rect x="1501.68" y="76.70" width="5.52" height="1.4" fill="#3bbd8a"/><rect x="1508.12" y="76.70" width="3.68" height="1.4" fill="#3bbd8a"/><rect x="1512.72" y="76.70" width="6.44" height="1.4" fill="#3bbd8a"/><rect x="1520.08" y="76.70" width="0.92" height="1.4" fill="#179fff"/><rect x="1521.00" y="76.70" width="6.44" height="1.4" fill="#569cd6"/><rect x="1527.44" y="76.70" width="0.92" height="1.4" fill="#179fff"/><rect x="1528.36" y="76.70" width="0.92" height="1.4" fill="#179fff"/><rect x="1486.96" y="78.56" width="5.52" height="1.4" fill="#3bbd8a"/><rect x="1493.40" y="78.56" width="6.44" height="1.4" fill="#d4d4d4"/><rect x="1483.28" y="80.42" width="0.92" height="1.4" fill="#179fff"/><rect x="1479.60" y="82.28" width="0.92" height="1.4" fill="#da70d6"/></g></svg>
<div class="a" style="left:329px;top:716px;width:1271px;height:32px;background:#2a2c3f"></div>
<div class="a" style="left:329px;top:748px;width:1271px;height:144px;background:#222336"></div>
<svg style="left:332;top:722" width="18" height="20" viewBox="332 722 18 20">
<path d="M337.2 728.4 L341.3 732.4 L345.4 728.4 M337.2 733 L341.3 737 L345.4 733" fill="none" stroke="#a9aac0" stroke-width="1.4" stroke-linecap="round" stroke-linejoin="round"/>
</svg>
<div class="t" style="left:1078.60px;top:726.50px;font-size:12.4px;color:#a9aac6;">0</div>
<div class="cb" style="left:1108px;top:725.6px"></div>
<div class="t" style="left:1130.40px;top:725.93px;font-size:12.6px;color:#a9aac6;">Listen on all transactions</div>
<svg style="left:1288;top:722" width="20" height="20" viewBox="1288 722 20 20">
<circle cx="1297.2" cy="732.6" r="4.2" fill="none" stroke="#a9aac0" stroke-width="1.8"/>
<path d="M1300.4 735.8 L1303.6 739" stroke="#a9aac0" stroke-width="1.9" stroke-linecap="round"/>
</svg>
<div class="a" style="left:1312.8px;top:717px;width:256.8px;height:31.6px;background:#35384c;border-radius:4px"></div>
<div class="t" style="left:1326.00px;top:726.17px;font-size:13.5px;color:#8c8da3;">Filter with transaction hash or address</div>
<svg style="left:1578;top:724" width="18" height="18" viewBox="1578 724 18 18">
<circle cx="1586.8" cy="732.6" r="5.6" fill="none" stroke="#a9aac0" stroke-width="1.5"/>
<path d="M1582.9 728.7 L1590.7 736.5" stroke="#a9aac0" stroke-width="1.5"/>
</svg>
<div class="t mono" style="left:365.60px;top:755.78px;font-size:12.3px;color:#a9aac8;letter-spacing:-0.710px;">The following libraries are accessible:</div>
<div class="a" style="left:356.2px;top:774.0px;width:2.6px;height:2.6px;background:#a9aac8;border-radius:50%"></div>
<div class="a" style="left:356.2px;top:787.5px;width:2.6px;height:2.6px;background:#a9aac8;border-radius:50%"></div>
<div class="a" style="left:356.2px;top:801.0px;width:2.6px;height:2.6px;background:#a9aac8;border-radius:50%"></div>
<div class="t mono" style="left:365.60px;top:768.98px;font-size:12.3px;color:#a9aac8;letter-spacing:-0.710px;text-decoration-thickness:1px;text-underline-offset:1.5px"><u>web3.js</u></div>
<div class="t mono" style="left:365.60px;top:782.48px;font-size:12.3px;color:#a9aac8;letter-spacing:-0.710px;text-decoration-thickness:1px;text-underline-offset:1.5px"><u>ethers.js</u></div>
<div class="t mono" style="left:365.60px;top:795.98px;font-size:12.3px;color:#a9aac8;letter-spacing:-0.710px;">sol-gpt <i>&lt;your Solidity question here&gt;</i></div>
<div class="t mono" style="left:365.60px;top:823.88px;font-size:12.3px;color:#a9aac8;letter-spacing:-0.710px;">Type the library name to see available commands.</div>
<svg style="left:332;top:866" width="14" height="14" viewBox="332 866 14 14">
<path d="M336.8 870.4 L341 873.2 L336.8 876" fill="none" stroke="#c8c9d6" stroke-width="1.4" stroke-linecap="round" stroke-linejoin="round"/>
</svg>
<div class="a" style="left:1585.2px;top:812.9px;width:7.6px;height:45.4px;background:#45475e;border-radius:4px"></div>
<div class="a" style="left:0px;top:892px;width:1600px;height:24px;background:#35576f;border-radius:0 0 10px 10px;overflow:hidden"></div>
<div class="a" style="left:1512px;top:892px;width:88px;height:24px;background:#c97539;border-radius:0 0 10px 0"></div>
<div class="t" style="left:18.20px;top:900.99px;font-size:10.4px;color:#f0f2f5;-webkit-text-stroke:0.45px #f0f2f5">Initialize as git repo</div>
<svg style="left:510;top:896" width="16" height="16" viewBox="510 896 16 16">
<path d="M517.8 899 Q521.6 899 521.6 902.6 Q521.6 904.6 520 906 L520 907.4 L515.6 907.4 L515.6 906 Q514 904.6 514 902.6 Q514 899 517.8 899 Z" fill="#3dba8a"/>
<rect x="515.8" y="908" width="4" height="1.3" rx="0.5" fill="#3dba8a"/>
</svg>
<div class="t" style="left:529.00px;top:899.82px;font-size:9.9px;color:#ffffff;font-weight:700;">Did you know?</div>
<div class="t" style="left:607.00px;top:901.08px;font-size:10.3px;color:#f0f2f5;-webkit-text-stroke:0.4px #f0f2f5">To prototype using the Gnosis safe multi sig wallet: create a multisig workspace.</div>
<div class="t" style="left:1383.00px;top:900.33px;font-size:10.0px;color:#f0f2f5;-webkit-text-stroke:0.45px #f0f2f5">RemixAI Copilot (enabled)</div>
<svg style="left:1516;top:896" width="20" height="16" viewBox="1516 896 20 16">
<path d="M1525.5 898.6 L1531.6 909.2 L1519.4 909.2 Z" fill="none" stroke="#ffffff" stroke-width="1.3" stroke-linejoin="round"/>
<path d="M1525.5 902.2 L1525.5 905.6" stroke="#ffffff" stroke-width="1.2"/>
<circle cx="1525.5" cy="907.2" r="0.7" fill="#ffffff"/>
</svg>
<div class="t" style="left:1539.00px;top:901.08px;font-size:10.3px;color:#ffffff;-webkit-text-stroke:0.4px #ffffff">Scam Alert</div>
<div class="a" style="left:0px;top:0px;width:1px;height:892px;background:#393b4f"></div>
<div class="a" style="left:47px;top:0px;width:1.2px;height:892px;background:#1f2031"></div>
<div class="a" style="left:0.2px;top:0px;width:331.4px;height:4.4px;background:rgba(10,35,55,0.55)"></div>
<div class="a" style="left:0px;top:0px;width:4.3px;height:589.2px;background:rgba(10,35,55,0.55)"></div>
<div class="a" style="left:326.4px;top:0px;width:5.2px;height:589.2px;background:rgba(10,35,55,0.55)"></div>
<div class="a" style="left:0px;top:583.9px;width:331.6px;height:5.2px;background:rgba(10,35,55,0.55)"></div>
<div class="a" style="left:1px;top:0.9px;width:329.4px;height:2.4px;background:#f5260a"></div>
<div class="a" style="left:1px;top:0.9px;width:2.3px;height:587px;background:#f5260a"></div>
<div class="a" style="left:327.6px;top:0.9px;width:2.8px;height:587px;background:#f5260a"></div>
<div class="a" style="left:1px;top:585px;width:329.4px;height:2.9px;background:#f5260a"></div>
</body></html>
